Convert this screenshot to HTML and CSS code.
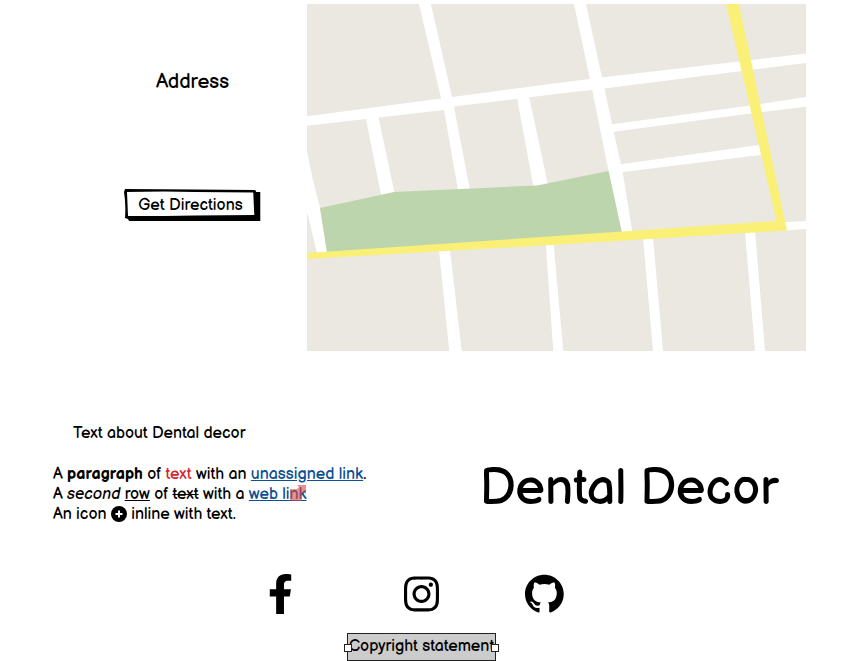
FILE: index.html
```html
<!DOCTYPE html>
<html lang="en">
<head>
<meta charset="utf-8">
<title>Dental Decor</title>
<link rel="stylesheet" href="styles.css">
</head>
<body>
<main>
  <section class="location">
    <div class="contact">
      <h2 class="address">Address</h2>
      <button class="directions" type="button">
        <svg class="frame" viewBox="0 0 136 33" preserveAspectRatio="none" aria-hidden="true">
          <path d="M1 0L70 .5 131 1 132 3 136 3V32H5L4 30 1 29Q2 15 0 3Z"/>
          <path class="face" d="M3 3L40 2.5 70 3 129 3.500 130 26 70 26.500 40 27 4 27Z"/>
        </svg>
        <span>Get Directions</span>
      </button>
    </div>
    <svg class="map" viewBox="307 4 499 347" role="img" aria-label="Street map">
      <path fill="#ebe8e1" d="M307 4H806V351H307Z"/>
      <g fill="#fff">
        <path d="M419 4H431L452 97 454 107 470 190H458L444 110 441 98Z"/>
        <path d="M307 116.3L441 98.5 560 82.7 601 77.5 806 53.5V63L604 88.5 560 93.5 454 106.5 444 110 307 125.7Z"/>
        <path d="M574 4H586L602 77.5 612 124 622.7 172 632.5 233H622L608.5 171 592 89Z"/>
        <path d="M366 119L378.5 117 394.5 193 381 195Z"/>
        <path d="M517 98L529 96 548 185 533.5 187Z"/>
        <path d="M307 151L313 180 320 208 327 253H317L307 212Z"/>
        <path d="M611 124.5L750 105.5 806 97V106.7L750 113.5 612 132Z"/>
        <path d="M619 164.5L759 145 771 153 760 155 621 172.3Z"/>
        <path d="M783 222.2L806 221V229L785 230.4Z"/>
        <path d="M439 250H450L461.7 351H449.3Z"/>
        <path d="M545.7 243H553.5L563.3 351H553.3Z"/>
        <path d="M643 237H653L663 351H653Z"/>
        <path d="M745 231H755L765 351H755Z"/>
      </g>
      <path fill="#bcd5ac" d="M320 208L394 192 537 185.5 608.5 171 622 233 327 252Z"/>
      <path fill="#faf077" d="M307 253L776.5 221 726 4H739L787 230.5 560 244.5 307 259Z"/>
    </svg>
  </section>

  <section class="about">
    <div class="copy">
      <h3 class="about-title">Text about Dental decor</h3>
      <p>A <b>paragraph</b> of <span class="red">text</span> with an <a href="#">unassigned link</a>.<br>
      A <em>second</em> <u>row</u> of <s>text</s> with a <a class="web" href="#">web link<svg class="external" viewBox="0 0 16 16" aria-hidden="true"><path d="M0 4H7L9 2 7 0H16V9L14 7 12 9V16H0Z"/></svg></a><br>
      An icon <svg class="plus" viewBox="0 0 16 16" aria-hidden="true"><circle cx="8" cy="8" r="8"/><path d="M8 4.5V11.5M4.5 8H11.5" stroke="#fff" stroke-width="2"/></svg> inline with text.</p>
    </div>
    <h1>Dental Decor</h1>
  </section>
</main>

<footer>
  <nav class="social" aria-label="Social media">
    <a class="facebook" href="#" aria-label="Facebook"><svg viewBox="0 0 320 512"><path d="M279.14 288l14.22-92.66h-88.91v-60.13c0-25.35 12.42-50.06 52.24-50.06h40.42V6.26S260.43 0 225.36 0c-73.22 0-121.08 44.38-121.08 124.72v70.62H22.89V288h81.39v224h100.17V288z"/></svg></a>
    <a href="#" aria-label="Instagram"><svg viewBox="0 0 448 512"><path d="M224.1 141c-63.6 0-114.9 51.3-114.9 114.9s51.3 114.9 114.9 114.9S339 319.500 339 255.900 287.700 141 224.100 141zm0 189.600c-41.100 0-74.700-33.500-74.700-74.700s33.500-74.700 74.700-74.700 74.700 33.500 74.700 74.700-33.600 74.700-74.700 74.700zm146.400-194.300c0 14.900-12 26.800-26.800 26.800-14.900 0-26.800-12-26.800-26.800s12-26.800 26.800-26.800 26.800 12 26.800 26.800zm76.100 27.200c-1.700-35.900-9.900-67.700-36.200-93.900-26.200-26.200-58-34.400-93.900-36.200-37-2.100-147.900-2.100-184.900 0-35.800 1.700-67.600 9.900-93.900 36.100s-34.400 58-36.200 93.900c-2.100 37-2.100 147.900 0 184.900 1.700 35.900 9.900 67.700 36.200 93.900s58 34.400 93.900 36.200c37 2.100 147.900 2.100 184.900 0 35.900-1.700 67.700-9.900 93.900-36.200 26.200-26.200 34.400-58 36.200-93.900 2.100-37 2.100-147.800 0-184.800zM398.800 388c-7.800 19.600-22.900 34.700-42.600 42.600-29.500 11.700-99.500 9-132.100 9s-102.700 2.600-132.100-9c-19.600-7.800-34.700-22.900-42.600-42.600-11.700-29.500-9-99.500-9-132.100s-2.600-102.700 9-132.100c7.800-19.600 22.900-34.700 42.600-42.600 29.500-11.700 99.500-9 132.100-9s102.700-2.600 132.100 9c19.600 7.800 34.700 22.900 42.600 42.600 11.700 29.500 9 99.500 9 132.100s2.700 102.700-9 132.100z"/></svg></a>
    <a href="#" aria-label="GitHub"><svg viewBox="0 0 496 512"><path transform="translate(0 8) scale(31)" d="M8 0C3.580 0 0 3.580 0 8c0 3.540 2.290 6.530 5.470 7.590.400.070.550-.170.550-.380 0-.190-.010-.820-.010-1.490-2.010.370-2.530-.490-2.690-.940-.090-.230-.480-.940-.820-1.130-.280-.150-.680-.520-.010-.530.630-.010 1.080.580 1.230.820.720 1.210 1.870.870 2.330.660.070-.520.280-.870.510-1.070-1.780-.200-3.640-.890-3.640-3.950 0-.870.310-1.590.820-2.150-.080-.200-.360-1.020.080-2.120 0 0 .670-.210 2.200.820.640-.180 1.320-.270 2-.270s1.360.090 2 .270c1.530-1.040 2.200-.820 2.200-.820.440 1.100.160 1.920.080 2.120.510.560.820 1.270.820 2.150 0 3.070-1.870 3.750-3.650 3.950.290.250.540.730.540 1.480 0 1.070-.010 1.930-.010 2.200 0 .210.150.460.550.380A8.010 8.010 0 0 0 16 8c0-4.420-3.580-8-8-8z"/></svg></a>
  </nav>
  <p class="copyright">Copyright statement</p>
</footer>
</body>
</html>
```
FILE: styles.css
```css
* {
  box-sizing: border-box;
}

body {
  margin: 0;
  background: #fff;
  color: #000;
  font: 16px/20px "Balsamiq Sans", Inter, "Liberation Sans", sans-serif;
}

h1, h2, h3, p {
  margin: 0;
  font-weight: 400;
}

.location {
  display: grid;
  grid-template-columns: 229fr 499fr;
  padding: 4px 46px 0 78px;
}

.contact {
  display: flex;
  flex-direction: column;
  align-items: center;
  gap: 95px;
  padding-top: 66px;
}

.address {
  font-size: 20px;
  line-height: 24px;
}

.directions {
  position: relative;
  padding: 7px 18px 6px 14px;
  border: 0;
  background: none;
  color: inherit;
  font: inherit;
  white-space: nowrap;
}

.directions span {
  position: relative;
}

.frame {
  position: absolute;
  inset: 0;
  width: 100%;
  height: 100%;
}

.face {
  fill: #fff;
}

.map {
  display: block;
  width: 100%;
}

.about {
  display: grid;
  grid-template-columns: 353fr 446fr;
  padding: 73px 0 0 53px;
}

.about-title {
  margin-bottom: 21px;
  padding-left: 20px;
  font-size: 16px;
}

.red {
  color: #d3292f;
}

.copy a {
  color: #0b4f94;
}

.web {
  position: relative;
}

.external {
  position: absolute;
  right: 0;
  top: 0;
  width: 16px;
  height: 16px;
  fill: #d94a4a;
  opacity: 0.6;
}

.plus {
  width: 16px;
  height: 16px;
  vertical-align: -3px;
}

h1 {
  padding-top: 34px;
  font-size: 50px;
  line-height: 62px;
  text-align: center;
}

footer {
  display: flex;
  flex-direction: column;
  align-items: center;
}

.social {
  display: flex;
  justify-content: center;
  gap: 0 86px;
  padding: 49px 20px 0 0;
}

.social svg {
  display: block;
  height: 40px;
}

.facebook {
  padding-right: 25px;
}

.copyright {
  position: relative;
  margin: 19px 9px 0 0;
  padding: 3px 1px;
  border: 1px solid #222;
  background: #ccc;
}

.copyright::before,
.copyright::after {
  content: "";
  position: absolute;
  top: 10px;
  width: 6px;
  height: 6px;
  border: 1px solid #222;
  background: #fff;
}

.copyright::before {
  left: -4px;
}

.copyright::after {
  right: -4px;
}
```
